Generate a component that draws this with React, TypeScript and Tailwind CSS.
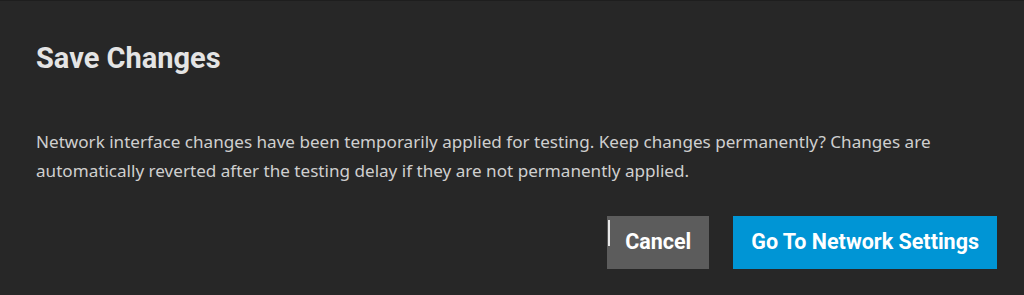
import React from "react";

export default function App() {
  return (
    <div className="w-[1024px] h-[295px] bg-[#272727] border-t border-[#1e1e1e] overflow-hidden">
      <div className="pl-9 pr-[27px] pt-[37px]">
        <h1 className="text-[29px] leading-[40px] font-bold text-[#e4e4e4] font-['Roboto',sans-serif]">
          Save Changes
        </h1>
        <p className="mt-[49px] pr-[10px] text-[17.1px] leading-[29px] text-[#cfcfcf] font-['Noto_Sans',sans-serif]">
          Network interface changes have been temporarily applied for testing. Keep changes permanently? Changes are automatically reverted after the testing delay if they are not permanently applied.
        </p>
        <div className="mt-[31px] flex justify-end gap-6">
          <button className="relative h-[53px] px-[18px] bg-[#5c5c5c] text-white text-[21.5px] font-bold font-['Roboto',sans-serif]">
            <span className="absolute left-[1px] top-[4px] h-[26px] w-[2px] bg-[#e8e8e8]" />
            Cancel
          </button>
          <button className="h-[53px] px-[18px] bg-[#0095d5] text-white text-[21.5px] font-bold font-['Roboto',sans-serif]">
            Go To Network Settings
          </button>
        </div>
      </div>
    </div>
  );
}
